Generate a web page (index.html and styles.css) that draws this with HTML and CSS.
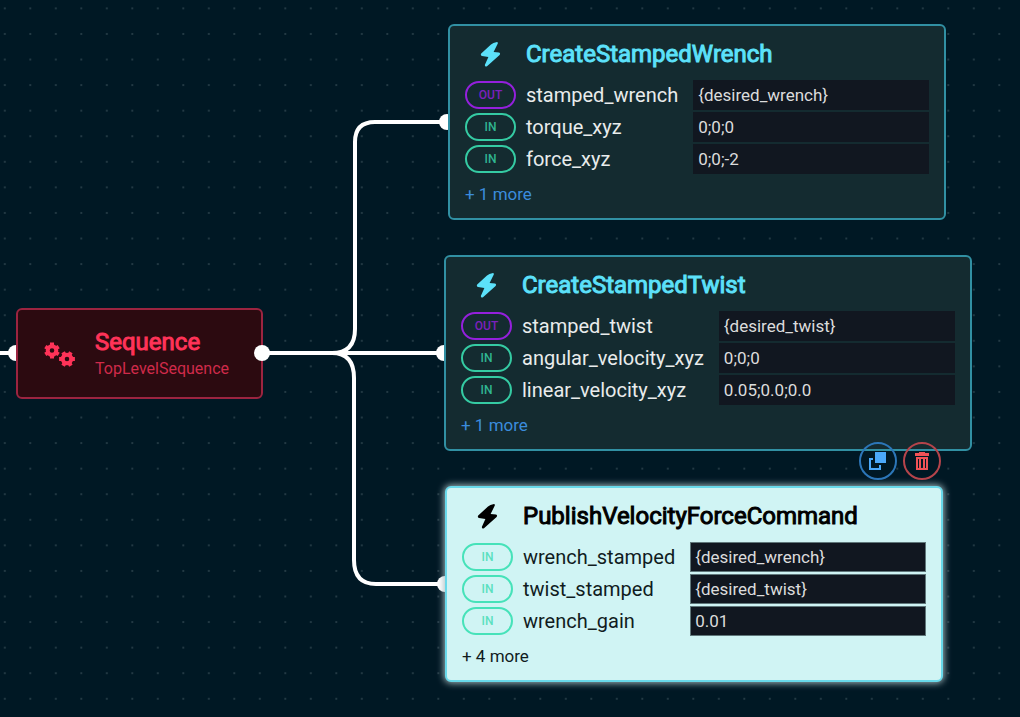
FILE: index.html
```html
<!DOCTYPE html>
<html lang="en">
<head>
<meta charset="utf-8">
<meta name="viewport" content="width=device-width, initial-scale=1">
<title>Behavior tree editor</title>
<link rel="stylesheet" href="styles.css">
</head>
<body>
<svg class="defs" aria-hidden="true">
  <symbol id="bolt" viewBox="0 0 22 26"><path d="M17 1Q13 1.5 11 3.5L1.2 12.6Q.2 14.4 2 15L8.4 16L4.8 24Q5 26.2 7 25.2L19.6 14Q20.8 12 19 11.5L13.6 11L17.8 2.6Q18 1 17 1Z"/></symbol>
</svg>
<main class="canvas">
  <svg class="wires" aria-hidden="true">
    <defs>
      <pattern id="dots" width="25.5" height="25.57" patternUnits="userSpaceOnUse" x="-8" y="-4.4">
        <circle cx="12.8" cy="12.8" r="1"/>
      </pattern>
    </defs>
    <rect class="grid-fill" width="100%" height="100%"/>
    <g class="wire">
      <path d="M0 353H16"/>
      <path d="M263 353H444"/>
      <path d="M263 353H332Q355 353 355 329V142Q355 122 375 122H448"/>
      <path d="M263 353H332Q354 353 354 378V560Q354 584 376 584H445"/>
    </g>
    <g class="port">
      <circle cx="16" cy="353" r="8"/>
      <circle cx="447" cy="122" r="8"/>
      <circle cx="444" cy="353" r="8"/>
      <circle cx="445" cy="584" r="8"/>
    </g>
  </svg>

  <section class="node sequence">
    <svg class="gears" viewBox="0 0 32 28" aria-hidden="true">
      <g class="gear">
        <circle cx="8.5" cy="9.5" r="4.3"/>
        <path d="M8.5 4.6V1.6M8.5 14.4V17.4M4.3 7.1L1.8 5.6M12.7 7.1L15.2 5.6M4.3 11.9L1.8 13.4M12.7 11.9L15.2 13.4"/>
        <circle cx="23.5" cy="18" r="4.3"/>
        <path d="M18.6 18H15.6M28.4 18H31.4M21.1 13.8L19.6 11.3M25.9 13.8L27.4 11.3M21.1 22.2L19.6 24.7M25.9 22.2L27.4 24.7"/>
      </g>
    </svg>
    <div>
      <h2 class="title">Sequence</h2>
      <p class="subtitle">TopLevelSequence</p>
    </div>
    <span class="out-port"></span>
  </section>

  <section class="node action wrench">
    <header class="head"><svg class="bolt"><use href="#bolt"/></svg><h2 class="title">CreateStampedWrench</h2></header>
    <div class="ports">
      <span class="pill out">OUT</span><label for="a1">stamped_wrench</label><input id="a1" value="{desired_wrench}">
      <span class="pill">IN</span><label for="a2">torque_xyz</label><input id="a2" value="0;0;0">
      <span class="pill">IN</span><label for="a3">force_xyz</label><input id="a3" value="0;0;-2">
    </div>
    <button class="more" type="button">+ 1 more</button>
  </section>

  <section class="node action twist">
    <header class="head"><svg class="bolt"><use href="#bolt"/></svg><h2 class="title">CreateStampedTwist</h2></header>
    <div class="ports">
      <span class="pill out">OUT</span><label for="b1">stamped_twist</label><input id="b1" value="{desired_twist}">
      <span class="pill">IN</span><label for="b2">angular_velocity_xyz</label><input id="b2" value="0;0;0">
      <span class="pill">IN</span><label for="b3">linear_velocity_xyz</label><input id="b3" value="0.05;0.0;0.0">
    </div>
    <button class="more" type="button">+ 1 more</button>
  </section>

  <section class="node action publish selected">
    <header class="head"><svg class="bolt"><use href="#bolt"/></svg><h2 class="title">PublishVelocityForceCommand</h2></header>
    <div class="ports">
      <span class="pill">IN</span><label for="c1">wrench_stamped</label><input id="c1" value="{desired_wrench}">
      <span class="pill">IN</span><label for="c2">twist_stamped</label><input id="c2" value="{desired_twist}">
      <span class="pill">IN</span><label for="c3">wrench_gain</label><input id="c3" value="0.01">
    </div>
    <button class="more" type="button">+ 4 more</button>
    <div class="tools">
      <button class="tool copy" type="button" aria-label="Duplicate">
        <svg viewBox="0 0 18 18"><path d="M6 0H17V11H6Z"/><path d="M4 6H0V18H12V13H10V16H2V8H4Z"/></svg>
      </button>
      <button class="tool delete" type="button" aria-label="Delete">
        <svg viewBox="0 0 18 18"><path d="M2 1H6V0H12V1H16V4H2Z"/><path fill-rule="evenodd" d="M3 5H15V18H3ZM5 7V16H6V7ZM8 7V16H10V7ZM12 7V16H13V7Z"/></svg>
      </button>
    </div>
  </section>
</main>
</body>
</html>
```
FILE: styles.css
```css
* { box-sizing: border-box; }

body {
  margin: 0;
  background: #001824;
  font-family: Roboto, "Liberation Sans", sans-serif;
}

h2, p { margin: 0; }

button {
  padding: 0;
  border: 0;
  background: none;
  font: inherit;
  color: inherit;
  cursor: pointer;
}

.defs { position: absolute; width: 0; height: 0; }

.canvas {
  position: relative;
  min-height: 100vh;
  overflow: hidden;
}

.wires { position: absolute; inset: 0; width: 100%; height: 100%; }
.wires pattern circle { fill: #2c424c; }
.grid-fill { fill: url(#dots); }
.wire { fill: none; stroke: #fff; stroke-width: 4; }
.port { fill: #fff; }

/* Nodes sit at their own coordinates on the canvas */
.node {
  position: absolute;
  border: 2px solid #3190a3;
  border-radius: 6px;
  background: #142b30;
  color: #e9ecec;
}
.wrench { left: 448px; top: 24px; }
.twist { left: 444px; top: 255px; }
.publish { left: 445px; top: 486px; }

.title {
  font-size: 24px;
  line-height: 28px;
  font-weight: 400;
  -webkit-text-stroke: 1px currentColor;
}

.sequence {
  left: 16px;
  top: 308px;
  display: flex;
  align-items: center;
  gap: 19px;
  padding: 18px 32px 15px 25px;
  border-color: #9c2440;
  background: #2c0a10;
  color: #ff3358;
}
.subtitle { font-size: 16px; line-height: 26px; color: #d02a4a; }
.gears { width: 33px; height: 28px; }
.gear { fill: none; stroke: #ff3358; stroke-width: 4; }
.out-port {
  position: absolute;
  right: -9px;
  top: 35px;
  width: 16px;
  height: 16px;
  border-radius: 50%;
  background: #fff;
}

.action {
  display: flex;
  flex-direction: column;
  padding: 14px 15px 12px;
}
.head {
  display: grid;
  grid-template-columns: 51px auto;
  gap: 10px;
  align-items: center;
  margin-bottom: 12px;
  color: #5ce1fa;
}
.bolt { width: 22px; height: 26px; fill: currentColor; justify-self: center; }

.ports {
  display: grid;
  grid-template-columns: 51px auto 236px;
  column-gap: 10px;
  row-gap: 2px;
  align-items: center;
}
.ports label { font-size: 20px; line-height: 30px; margin-right: 5px; }
.ports input {
  width: 100%;
  height: 30px;
  padding: 0 5px;
  border: 0;
  background: #111720;
  color: #dcdcdc;
  font-family: inherit;
  font-size: 17px;
}
.pill {
  height: 28px;
  border: 2px solid #35cba3;
  border-radius: 14px;
  color: #30b592;
  font-size: 12px;
  font-weight: 500;
  line-height: 24px;
  text-align: center;
}
.pill.out { border-color: #9420dc; color: #7c20bd; }

.more {
  align-self: flex-start;
  margin-top: 9px;
  margin-bottom: 1px;
  font-size: 17px;
  line-height: 22px;
  color: #3b8cdc;
}

.selected {
  border-color: #69d9ea;
  background: #d0f4f4;
  color: #111c1e;
  box-shadow: 0 0 7px 1px #a5bcc0;
}
.selected .head { color: #000; }
.selected .more { color: #111c1e; }
.selected .pill { border-color: #46e2b9; color: #5be0bf; }
.selected .ports input { border: 1px solid #60777a; padding: 0 4px; }

.tools {
  position: absolute;
  right: 0;
  top: -46px;
  display: flex;
  gap: 6px;
}
.tool {
  display: grid;
  place-items: center;
  width: 38px;
  height: 38px;
  border: 2px solid;
  border-radius: 50%;
}
.tool svg { width: 18px; height: 18px; }
.copy { border-color: #2c76b8; }
.copy svg { fill: #4ba9fb; }
.delete { border-color: #b5444b; }
.delete svg { fill: #f05256; }
```
